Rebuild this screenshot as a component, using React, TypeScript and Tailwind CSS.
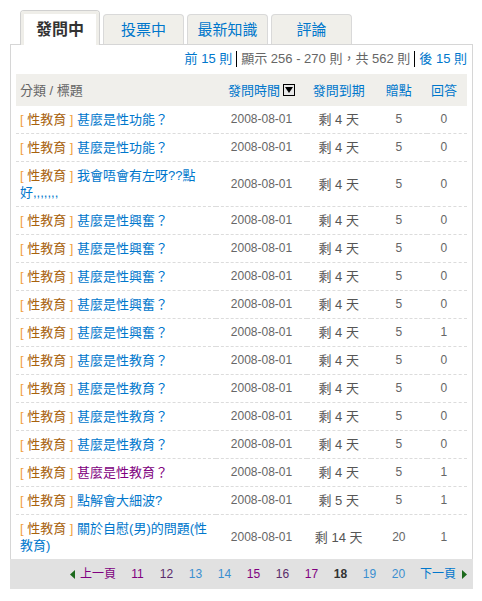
import React from "react";

type Row = {
  title: string;
  visited?: boolean;
  left: string;
  points: number;
  answers: number;
};

const rows: Row[] = [
  { title: "甚麼是性功能？", left: "4", points: 5, answers: 0 },
  { title: "甚麼是性功能？", left: "4", points: 5, answers: 0 },
  { title: "我會唔會有左呀??點好,,,,,,,", left: "4", points: 5, answers: 0 },
  { title: "甚麼是性興奮？", left: "4", points: 5, answers: 0 },
  { title: "甚麼是性興奮？", left: "4", points: 5, answers: 0 },
  { title: "甚麼是性興奮？", left: "4", points: 5, answers: 0 },
  { title: "甚麼是性興奮？", left: "4", points: 5, answers: 0 },
  { title: "甚麼是性興奮？", left: "4", points: 5, answers: 1 },
  { title: "甚麼是性教育？", left: "4", points: 5, answers: 0 },
  { title: "甚麼是性教育？", left: "4", points: 5, answers: 0 },
  { title: "甚麼是性教育？", left: "4", points: 5, answers: 0 },
  { title: "甚麼是性教育？", left: "4", points: 5, answers: 0 },
  { title: "甚麼是性教育？", visited: true, left: "4", points: 5, answers: 1 },
  { title: "點解會大細波?", left: "5", points: 5, answers: 1 },
  { title: "關於自慰(男)的問題(性教育)", left: "14", points: 20, answers: 1 },
];

const pages = [
  { n: 11, cls: "text-[#800080]" },
  { n: 12, cls: "text-[#5a2a6a]" },
  { n: 13, cls: "text-[#3b8fd0]" },
  { n: 14, cls: "text-[#3b8fd0]" },
  { n: 15, cls: "text-[#800080]" },
  { n: 16, cls: "text-[#5a2a6a]" },
  { n: 17, cls: "text-[#800080]" },
  { n: 18, cls: "text-[#333] font-bold" },
  { n: 19, cls: "text-[#3b8fd0]" },
  { n: 20, cls: "text-[#3b8fd0]" },
];

const Tab = ({ label }: { label: string }) => (
  <div className="w-[81px] h-[30px] flex items-center justify-center bg-[#f0efea] border border-b-0 border-[#d9d9d9] rounded-t-[4px] text-[15px] text-[#0077cc]">
    {label}
  </div>
);

const Triangle = ({ dir }: { dir: "left" | "right" }) => (
  <svg width="5" height="9" viewBox="0 0 5 9">
    {dir === "left" ? (
      <polygon points="5,0 0,4.5 5,9" fill="#1c6a1c" />
    ) : (
      <polygon points="0,0 5,4.5 0,9" fill="#1c6a1c" />
    )}
  </svg>
);

export default function App() {
  return (
    <div
      className="bg-white w-[482px] min-h-[601px] pt-[10px] pl-[10px] text-[13px] leading-[17px]"
      style={{ fontFamily: '"Liberation Sans", "Noto Sans CJK TC", sans-serif' }}
    >
      <div className="w-[463px]">
        {/* tabs */}
        <div className="flex items-end gap-[3px] pl-[10px] relative z-10">
          <div className="w-[80px] h-[35px] -mb-px border border-b-0 border-[#d0d0d0] rounded-t-[4px] bg-white">
            <div className="h-full border-[3px] border-b-0 border-[#efeee9] rounded-t-[3px] flex items-center justify-center text-[16px] font-bold text-[#333]">
              發問中
            </div>
          </div>
          <Tab label="投票中" />
          <Tab label="最新知識" />
          <Tab label="評論" />
        </div>

        {/* panel */}
        <div className="border border-b-0 border-[#d6d6d6]">
          <div className="px-[5px]">
            <div className="flex justify-end items-center pt-[5px] text-[#666]">
              <span className="text-[#0077cc]">前 15 則</span>
              <span className="mx-[4px] h-[16px] border-l border-black" />
              <span>顯示 256 - 270 則，共 562 則</span>
              <span className="mx-[4px] h-[16px] border-l border-black" />
              <span className="text-[#0077cc]">後 15 則</span>
            </div>

            <table className="w-full table-fixed border-collapse mt-[7px]">
              <colgroup>
                <col className="w-[200px]" />
                <col className="w-[90px]" />
                <col className="w-[64px]" />
                <col className="w-[56px]" />
                <col className="w-[40px]" />
              </colgroup>
              <thead>
                <tr className="bg-[#f0efeb] h-[32px]">
                  <th className="text-left font-normal text-[#666] pl-[4px]">分類 / 標題</th>
                  <th className="font-normal text-[#0077cc]">
                    <span className="inline-flex items-center gap-[3px]">
                      發問時間
                      <span className="w-[12px] h-[12px] border border-black bg-[#e8e8e8] flex items-center justify-center">
                        <svg width="8" height="6" viewBox="0 0 8 6">
                          <polygon points="0,0 8,0 4,6" fill="#000" />
                        </svg>
                      </span>
                    </span>
                  </th>
                  <th className="font-normal text-[#0077cc]">發問到期</th>
                  <th className="font-normal text-[#0077cc]">贈點</th>
                  <th className="font-normal text-[#0077cc] pr-[6px]">回答</th>
                </tr>
              </thead>
              <tbody>
                {rows.map((r, i) => {
                  const last = i === rows.length - 1;
                  const b = last ? "" : "border-b border-dashed border-[#dcdcdc]";
                  return (
                    <tr key={i}>
                      <td className={`${b} py-[5px] pl-[4px] pr-[4px] align-middle`}>
                        <span className="text-[#f0a040]">[ </span>
                        <span className="text-[#a8620c]">性教育</span>
                        <span className="text-[#f0a040]"> ] </span>
                        <span className={r.visited ? "text-[#800080]" : "text-[#0077cc]"}>
                          {r.title}
                        </span>
                      </td>
                      <td className={`${b} text-center text-[12px] text-[#666]`}>2008-08-01</td>
                      <td className={`${b} text-center text-[#555]`}>剩 {r.left} 天</td>
                      <td className={`${b} text-center text-[12px] text-[#666]`}>{r.points}</td>
                      <td className={`${b} text-center text-[12px] text-[#666] pr-[6px]`}>{r.answers}</td>
                    </tr>
                  );
                })}
              </tbody>
            </table>
          </div>

          {/* pagination */}
          <div className="bg-[#e1e1e1] h-[30px] flex items-center justify-end pr-[6px] -mx-px text-[12px]">
            <Triangle dir="left" />
            <span className="ml-[5px] text-[#800080]">上一頁</span>
            <div className="flex ml-[7px]">
              {pages.map((p) => (
                <span key={p.n} className={`w-[29px] text-center ${p.cls}`}>
                  {p.n}
                </span>
              ))}
            </div>
            <span className="ml-[7px] mr-[6px] text-[#0077cc]">下一頁</span>
            <Triangle dir="right" />
          </div>
        </div>
      </div>
    </div>
  );
}
